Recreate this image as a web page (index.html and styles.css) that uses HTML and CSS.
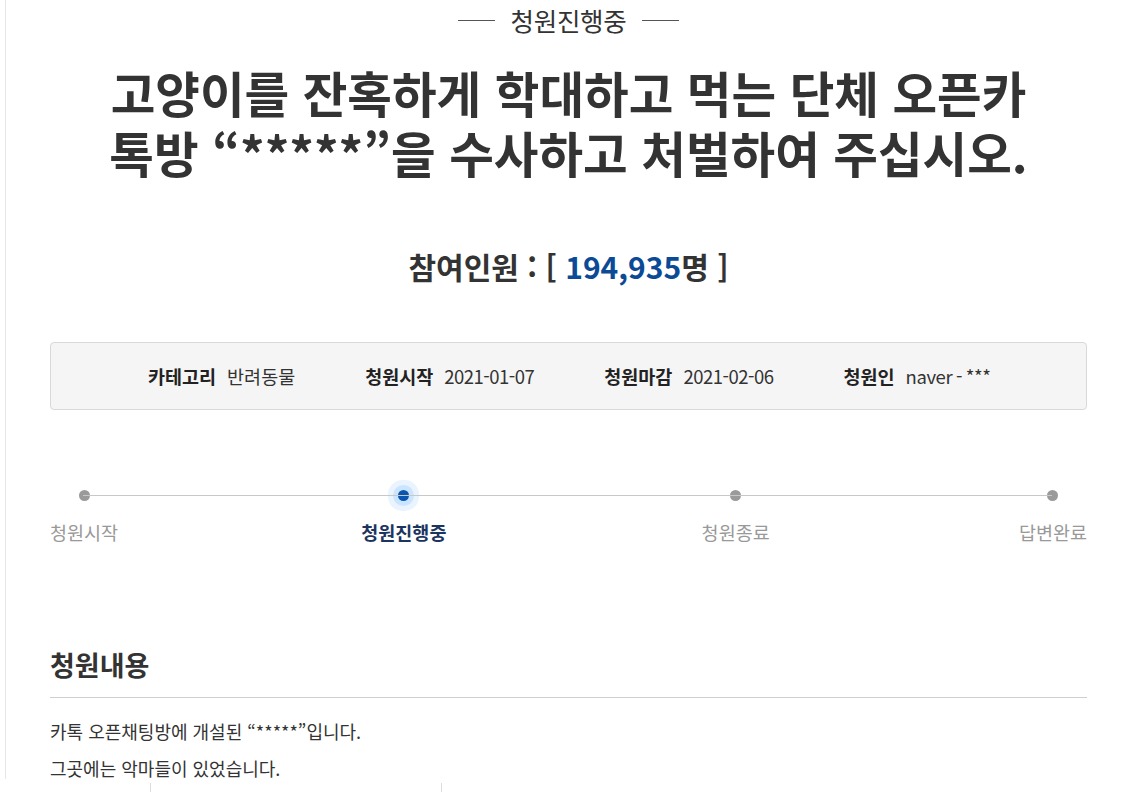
FILE: index.html
```html
<!DOCTYPE html>
<html lang="ko">
<head>
<meta charset="utf-8">
<link rel="stylesheet" href="styles.css">
</head>
<body>
<div class="page">
  <div class="frame">
    <main class="content">
      <div class="status"><span class="status-line"></span><span class="status-text">청원진행중</span><span class="status-line"></span></div>
      <h1 class="title">고양이를 잔혹하게 학대하고 먹는 단체 오픈카<br>톡방 “*****”을 수사하고 처벌하여 주십시오.</h1>
      <div class="count">참여인원 : [ <span class="num">194,935</span>명 ]</div>
      <ul class="info">
        <li><b>카테고리</b><span>반려동물</span></li>
        <li><b>청원시작</b><span class="date">2021-01-07</span></li>
        <li><b>청원마감</b><span class="date">2021-02-06</span></li>
        <li><b>청원인</b><span class="user">naver - ***</span></li>
      </ul>
      <div class="progress">
        <div class="track"></div>
        <div class="step"><span class="dot"></span><span class="label">청원시작</span></div>
        <div class="step active"><span class="dot"></span><span class="label">청원진행중</span></div>
        <div class="step"><span class="dot"></span><span class="label">청원종료</span></div>
        <div class="step"><span class="dot"></span><span class="label">답변완료</span></div>
      </div>
      <h2 class="section">청원내용</h2>
      <div class="body">
        <p>카톡 오픈채팅방에 개설된 “*****”입니다.</p>
        <p>그곳에는 악마들이 있었습니다.</p>
      </div>
    </main>
  </div>
  <div class="foot"><span class="tick t1"></span><span class="tick t2"></span></div>
</div>
</body>
</html>
```
FILE: styles.css
```css
html, body { margin: 0; padding: 0; background: #fff; }
body {
  font-family: "Noto Sans CJK KR", "Noto Sans", sans-serif;
  color: #333;
  width: 1126px;
  height: 792px;
  overflow: hidden;
}
.page { height: 792px; display: flex; flex-direction: column; }
.frame {
  margin-left: 5px;
  border-left: 1px solid #e6e6e6;
  height: 779px;
}
.content {
  width: 1037px;
  margin-left: 44px;
}
.status {
  display: flex;
  align-items: center;
  justify-content: center;
  gap: 16px;
  height: 40px;
}
.status-line { width: 37px; height: 1px; background: #555; }
.status-text { font-size: 25.5px; color: #333; line-height: 1; letter-spacing: -0.3px; }
.title {
  margin: 22px 0 0;
  text-align: center;
  font-size: 48.5px;
  font-weight: 700;
  line-height: 60px;
  letter-spacing: 0;
  color: #333;
}
.count {
  margin-top: 64px;
  text-align: center;
  font-size: 30px;
  font-weight: 700;
  line-height: 40px;
  color: #333;
}
.count .num { color: #0b4a96; }
.info {
  list-style: none;
  margin: 56px 0 0;
  padding: 0 0 0 97px;
  height: 66px;
  border: 1px solid #d9d9d9;
  border-radius: 4px;
  background: #f5f5f5;
  display: flex;
  align-items: center;
  gap: 70px;
  font-size: 18.5px;
}
.info li { display: flex; gap: 11px; }
.info b { font-weight: 700; color: #222; }
.info span { color: #333; }
.info .date { letter-spacing: -0.5px; }
.info .user { letter-spacing: -0.4px; word-spacing: -1px; }
.progress {
  position: relative;
  margin-top: 73px;
  display: flex;
  justify-content: space-between;
}
.track {
  position: absolute;
  left: 33px; right: 35px; top: 12px;
  height: 1px; background: #c8c8c8;
}
.step { display: flex; flex-direction: column; align-items: center; }
.step.active { margin-left: -6px; margin-right: 6px; }
.dot {
  width: 11px; height: 11px; border-radius: 50%;
  background: #9a9a9a;
  margin: 7px 0 0;
}
.active .dot {
  background: #0a55b0;
  box-shadow: 0 0 0 5px #cbe4ff, 0 0 0 10px #e9f4ff;
}
.label {
  margin-top: 18px;
  font-size: 18.5px;
  color: #999;
  line-height: 26px;
}
.active .label { color: #1b3560; font-weight: 700; }
.section {
  margin: 102px 0 0;
  font-size: 27px;
  font-weight: 700;
  color: #333;
  line-height: 36px;
  padding-bottom: 14px;
  border-bottom: 1px solid #cfcfcf;
}
.body { margin-top: 15px; font-size: 18px; color: #333; }
.body p { margin: 0; line-height: 37px; }
.foot { position: relative; flex: 1; }
.tick { position: absolute; top: 4px; bottom: 0; width: 1px; background: #ddd; }
.t1 { left: 150px; }
.t2 { left: 441px; }
```
